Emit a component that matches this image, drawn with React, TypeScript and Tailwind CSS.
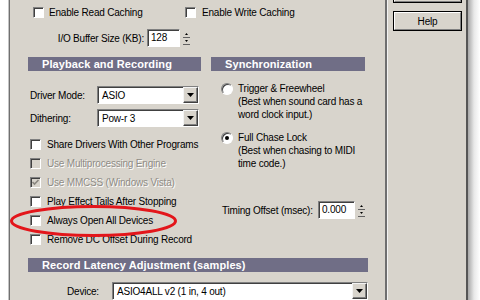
import React from "react";

const BG = "bg-[#d8d4cc]";

function Check({ checked = false, disabled = false }: { checked?: boolean; disabled?: boolean }) {
  return (
    <span
      className={`relative block w-[11px] h-[11px] shrink-0 border border-t-[#808080] border-l-[#808080] border-b-white border-r-white shadow-[inset_1px_1px_0_#404040] ${
        disabled ? "bg-[#d8d4cc]" : "bg-white"
      }`}
    >
      {checked && (
        <svg width="9" height="9" viewBox="0 0 9 9" className="absolute left-0 top-0">
          <polyline points="1.5,4 3.5,6 7.5,2" fill="none" stroke={disabled ? "#8a8780" : "#000"} strokeWidth="1.6" />
        </svg>
      )}
    </span>
  );
}

function CheckRow({ label, checked, disabled }: { label: string; checked?: boolean; disabled?: boolean }) {
  return (
    <div className="h-[19px] flex items-center pl-[2px]">
      <Check checked={checked} disabled={disabled} />
      <span
        className={`ml-[6px] whitespace-nowrap ${
          disabled ? "text-[#8f8c86] [text-shadow:1px_1px_0_#ffffff]" : "text-black"
        }`}
      >
        {label}
      </span>
    </div>
  );
}

function Radio({ on = false }: { on?: boolean }) {
  return (
    <span className="relative flex items-center justify-center w-[12px] h-[12px] shrink-0 rounded-full bg-white border border-t-[#808080] border-l-[#808080] border-b-white border-r-white shadow-[inset_1px_1px_0_#404040]">
      {on && <span className="block w-[4px] h-[4px] rounded-full bg-black" />}
    </span>
  );
}

function Arrow() {
  return (
    <svg width="7" height="4" viewBox="0 0 7 4">
      <polygon points="0,0 7,0 3.5,4" fill="#000" />
    </svg>
  );
}

function Select({ value, width }: { value: string; width: string }) {
  return (
    <div
      className={`${width} h-[18px] flex bg-white border border-t-[#808080] border-l-[#808080] border-b-white border-r-white shadow-[inset_1px_1px_0_#404040]`}
    >
      <span className="flex-1 pl-[4px] pt-[1px] leading-[16px] whitespace-nowrap overflow-hidden">{value}</span>
      <span className="w-[15px] h-[16px] flex items-center justify-center bg-[#d8d4cc] border border-t-[#f4f4f4] border-l-[#f4f4f4] border-b-[#404040] border-r-[#404040] shadow-[inset_-1px_-1px_0_#808080]">
        <Arrow />
      </span>
    </div>
  );
}

function Spinner() {
  return (
    <div className="w-[7px] h-[14px] flex flex-col gap-[1px]">
      <div className="flex-1 flex items-center justify-center bg-[#d8d4cc] border-b border-b-[#606060]">
        <svg width="3" height="2" viewBox="0 0 3 2">
          <polygon points="1.5,0 3,2 0,2" fill="#000" />
        </svg>
      </div>
      <div className="flex-1 flex items-center justify-center bg-[#d8d4cc] border-b border-b-[#606060]">
        <svg width="3" height="2" viewBox="0 0 3 2">
          <polygon points="0,0 3,0 1.5,2" fill="#000" />
        </svg>
      </div>
    </div>
  );
}

function Field({ value, width }: { value: string; width: string }) {
  return (
    <div
      className={`${width} h-[18px] bg-white pl-[3px] leading-[16px] border border-t-[#808080] border-l-[#808080] border-b-white border-r-white shadow-[inset_1px_1px_0_#404040]`}
    >
      {value}
    </div>
  );
}

function Header({ title, width }: { title: string; width: string }) {
  return (
    <div className={`${width} h-[14px] bg-[#706e86] pl-[14px] flex items-center text-white font-bold text-[11px] tracking-[0.1px] whitespace-nowrap`}>
      {title}
    </div>
  );
}

function Button({ label, extra = "" }: { label?: string; extra?: string }) {
  return (
    <div className={`w-[69px] h-[20px] border border-black ${extra}`}>
      <div className="w-full h-full flex items-center justify-center border border-t-white border-l-white border-b-[#808080] border-r-[#808080]">
        {label}
      </div>
    </div>
  );
}

export default function App() {
  return (
    <div className="relative w-[480px] h-[300px] overflow-hidden bg-white flex font-['Liberation_Sans',Arial,sans-serif] text-[10px] tracking-[-0.2px] text-black leading-[13px]">
      <div className="w-[8px] bg-white" />
      <div className="w-[1px] bg-[#c4c4c4]" />
      <div className="w-[1px] bg-[#707070]" />

      {/* main settings panel */}
      <div className={`w-[375px] ${BG} pt-[7px]`}>
        <div className="h-[11px] flex items-center">
          <div className="w-[152px] ml-[23px] flex items-center">
            <Check />
            <span className="ml-[5px] whitespace-nowrap">Enable Read Caching</span>
          </div>
          <div className="flex items-center">
            <Check />
            <span className="ml-[6px] whitespace-nowrap">Enable Write Caching</span>
          </div>
        </div>

        <div className="mt-[11px] h-[18px] flex items-center ml-[45px]">
          <span className="w-[92px] text-right pr-[3px] whitespace-nowrap">I/O Buffer Size (KB):</span>
          <Field value="128" width="w-[33px]" />
          <div className="ml-[3px]">
            <Spinner />
          </div>
        </div>

        <div className="mt-[10px] ml-[18px] flex">
          {/* left column */}
          <div className="w-[173px]">
            <Header title="Playback and Recording" width="w-[173px]" />
            <div className="mt-[15px] h-[18px] flex items-center">
              <span className="w-[69px] pl-[2px]">Driver Mode:</span>
              <Select value="ASIO" width="w-[102px]" />
            </div>
            <div className="mt-[5px] h-[18px] flex items-center">
              <span className="w-[69px] pl-[2px]">Dithering:</span>
              <Select value="Pow-r 3" width="w-[102px]" />
            </div>
            <div className="mt-[8px]">
              <CheckRow label="Share Drivers With Other Programs" />
              <CheckRow label="Use Multiprocessing Engine" disabled />
              <CheckRow label="Use MMCSS (Windows Vista)" checked disabled />
              <CheckRow label="Play Effect Tails After Stopping" />
              <CheckRow label="Always Open All Devices" />
              <CheckRow label="Remove DC Offset During Record" />
            </div>
          </div>

          {/* right column */}
          <div className="w-[154px] ml-[10px]">
            <Header title="Synchronization" width="w-[154px]" />
            <div className="mt-[11px] flex items-start pl-[10px]">
              <div className="mt-[1px]">
                <Radio />
              </div>
              <div className="ml-[5px] whitespace-nowrap">
                <div>Trigger &amp; Freewheel</div>
                <div>(Best when sound card has a</div>
                <div>word clock input.)</div>
              </div>
            </div>
            <div className="mt-[10px] flex items-start pl-[10px]">
              <div className="mt-[1px]">
                <Radio on />
              </div>
              <div className="ml-[5px] whitespace-nowrap">
                <div>Full Chase Lock</div>
                <div>(Best when chasing to MIDI</div>
                <div>time code.)</div>
              </div>
            </div>
            <div className="mt-[31px] h-[18px] flex items-center pl-[11px]">
              <span className="w-[96px] text-right pr-[8px] whitespace-nowrap">Timing Offset (msec):</span>
              <Field value="0.000" width="w-[45px]" />
              <div className="ml-[3px]">
                <Spinner />
              </div>
            </div>
          </div>
        </div>

        <div className="mt-[9px] ml-[18px]">
          <Header title="Record Latency Adjustment (samples)" width="w-[340px]" />
        </div>
        <div className="mt-[10px] h-[18px] flex items-center ml-[57px]">
          <span className="w-[45px]">Device:</span>
          <Select value="ASIO4ALL v2 (1 in, 4 out)" width="w-[256px]" />
        </div>
      </div>

      <div className="w-[2px] bg-[#6f6f6f]" />
      <div className="w-[1px] bg-[#f2f2f2]" />

      {/* button strip, top button is scrolled out of view */}
      <div className={`w-[78px] ${BG} pl-[5px] flex flex-col`}>
        <Button extra="mt-[-17px]" />
        <Button label="Help" extra="mt-[8px]" />
      </div>

      <div className="w-[2px] bg-[#555555]" />
      <div className="flex-1 bg-gradient-to-r from-[#a8a8a8] via-[#e8e8e8] to-white" />

      {/* red annotation ring */}
      <svg className="absolute left-0 top-0 pointer-events-none" width="480" height="300" viewBox="0 0 480 300">
        <ellipse cx="93.5" cy="221" rx="82" ry="14.5" fill="none" stroke="#e3161b" strokeWidth="3" />
      </svg>
    </div>
  );
}
